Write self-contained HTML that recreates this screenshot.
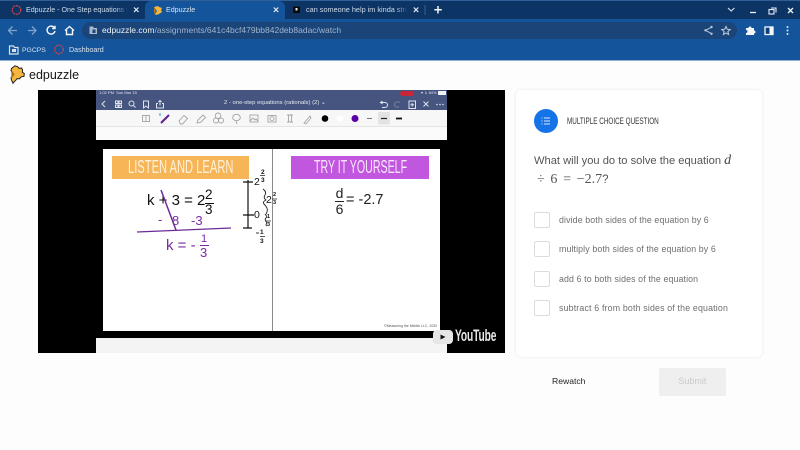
<!DOCTYPE html>
<html>
<head>
<meta charset="utf-8">
<style>
html,body{margin:0;padding:0;width:800px;height:450px;overflow:hidden;background:#fdfdfd}
body{position:relative;font-family:"Liberation Sans","DejaVu Sans",sans-serif}
.a{position:absolute;white-space:nowrap}
.b{filter:blur(.35px)}
svg{position:absolute;overflow:visible}
</style>
</head>
<body>
<!-- browser chrome -->
<div class="a" style="left:0;top:0;width:800px;height:61px;background:#14549b"></div>
<div class="a" style="left:0;top:0;width:800px;height:19px;background:#0c3566"></div>
<div class="a" style="left:0;top:0;width:800px;height:1px;background:#2f5f96"></div>
<div class="a" style="left:145px;top:1px;width:140px;height:19px;background:#14549b;border-radius:6px 6px 0 0"></div>
<div class="a" style="left:0;top:60px;width:800px;height:1px;background:#8fb0d2"></div>
<div class="a" style="left:82px;top:22px;width:655px;height:17px;border-radius:9px;background:#1b4478"></div>

<!-- tabs -->
<svg style="left:0;top:0" width="800" height="60">
 <circle cx="16.500" cy="10" r="4.300" fill="none" stroke="#c9424f" stroke-width="1.300" stroke-dasharray="2 .8"/>
 <path d="M154 7l4-1 1 1 3 1-1 2 1 2-3 2-3 1-1-1 2-3z" fill="#f4b63f"/>
 <path d="M154 7v7l2-3z" fill="#b47a1e"/>
 <rect x="293" y="6.500" width="7" height="6.500" rx="1" fill="#0a0a0a"/>
 <rect x="295.500" y="8" width="2" height="2.500" fill="#eee"/>
 <g stroke="#e8eef6" stroke-width="1.200" fill="none">
  <path d="M134 7.500l4.500 4.500M138.500 7.500l-4.500 4.500"/>
  <path d="M273.800 7.500l4.500 4.500M278.300 7.500l-4.500 4.500"/>
  <path d="M413.800 7.500l4.500 4.500M418.300 7.500l-4.500 4.500"/>
 </g>
 <path d="M425 5v10" stroke="#3a5f8c" stroke-width="1"/>
 <path d="M438 6v7.500M434.300 9.700h7.500" stroke="#f2f5f9" stroke-width="1.500"/>
 <!-- window controls -->
 <path d="M728 8l3.200 3 3.200-3" fill="none" stroke="#dce5ef" stroke-width="1.100"/>
 <path d="M750 12.500h6" stroke="#f0f4f8" stroke-width="1.300"/>
 <rect x="769" y="9.500" width="5" height="4.500" fill="none" stroke="#e8eef5" stroke-width="1.100"/>
 <path d="M771 8h5v4.500" fill="none" stroke="#e8eef5" stroke-width="1.100"/>
 <path d="M788 8l5 5M793 8l-5 5" stroke="#f0f4f8" stroke-width="1.300"/>
 <!-- nav -->
 <g fill="none" stroke-width="1.300">
  <path d="M9 30.500h8M12.500 26.500l-4 4 4 4" stroke="#7fa3c9"/>
  <path d="M28 30.500h8M32 26.500l4 4-4 4" stroke="#7fa3c9"/>
  <path d="M54.500 28a4 4 0 1 0 .5 3M55 25.800v2.800h-2.800" stroke="#f4f6f9" stroke-width="1.400"/>
  <path d="M65 30.500l4.500-4 4.500 4M66.500 30v4.500h6V30" stroke="#f4f6f9" stroke-width="1.400"/>
 </g>
 <!-- toolbar right -->
 <path d="M705.500 30.300l6-3M705.500 30.300l6 3.400" stroke="#b6c6d8" stroke-width="1" fill="none"/>
 <circle cx="705.500" cy="30.300" r="1.200" fill="#b6c6d8"/><circle cx="711.500" cy="27" r="1.200" fill="#b6c6d8"/><circle cx="711.500" cy="33.800" r="1.200" fill="#b6c6d8"/>
 <path d="M726 26.500l1.200 2.700 3 .3-2.300 2 .7 3-2.600-1.600-2.600 1.600.7-3-2.300-2 3-.3z" fill="none" stroke="#c2d0e0" stroke-width="1"/>
 <path d="M746 28h2.500a1.500 1.500 0 0 1 3 0h2.500v2.500a1.500 1.500 0 0 1 0 3V35h-8v-2a1.500 1.500 0 0 0 0-3z" fill="#f4f6f9"/>
 <rect x="765" y="27" width="8" height="7.500" fill="#0f3f78" stroke="#f4f6f9" stroke-width="1.300"/>
 <rect x="769.500" y="27" width="3.500" height="7.500" fill="#f4f6f9"/>
 <circle cx="787.500" cy="27" r="1" fill="#dfe7f0"/><circle cx="787.500" cy="30.500" r="1" fill="#dfe7f0"/><circle cx="787.500" cy="34" r="1" fill="#dfe7f0"/>
 <!-- omnibox info icon -->
 <path d="M89.500 26.500h3.500l1 1.500h3v6h-7.500z" fill="#a8bad0"/><path d="M92.500 29.500h3v3.500h-3z" fill="#1b4478"/>
 <!-- bookmarks -->
 <path d="M9.500 46h4l1 1.500h3.500V54H9.500z" fill="none" stroke="#d7e1ec" stroke-width="1.200"/>
 <rect x="12" y="49" width="4" height="3" fill="#d7e1ec"/>
 <circle cx="59" cy="49.500" r="4.300" fill="none" stroke="#c9424f" stroke-width="1.300" stroke-dasharray="2 .8"/>
</svg>

<div class="a b" style="left:26px;top:3px;width:102px;height:14px;overflow:hidden;font-size:7.100px;line-height:14px;color:#cfdae7;-webkit-mask-image:linear-gradient(90deg,#000 88%,transparent)">Edpuzzle - One Step equations w</div>
<div class="a b" style="left:166px;top:3px;font-size:7.100px;line-height:14px;color:#dce5ef">Edpuzzle</div>
<div class="a b" style="left:306px;top:3px;width:102px;height:14px;overflow:hidden;font-size:7.300px;line-height:14px;color:#cfdae7;-webkit-mask-image:linear-gradient(90deg,#000 88%,transparent)">can someone help im kinda stru</div>
<div class="a b" style="left:102px;top:23px;font-size:8.500px;line-height:15px;color:#9fb4cc"><span style="color:#eef2f7">edpuzzle.com</span>/assignments/641c4bcf479bb842deb8adac/watch</div>
<div class="a b" style="left:22px;top:43px;font-size:6.800px;line-height:15px;color:#d9e2ec">PGCPS</div>
<div class="a b" style="left:69px;top:43px;font-size:7.100px;line-height:15px;color:#d9e2ec">Dashboard</div>

<!-- edpuzzle logo -->
<svg style="left:10px;top:65px" width="16" height="19" viewBox="0 0 16 19">
 <path d="M1.500 3.500L5 .8l2.800 1L9 3.300l2.600-.3 1 2-.3 2.200 2 1.300-.3 2.800-3 .6-1.500 2-2.400-.3-1.600 2-2.500 2.600L1.500 15l-.5-2 2.800-3.500L1 5.500z" fill="#f4b63f" stroke="#222" stroke-width="1"/>
 <path d="M1.300 5.800l3 3.700-3 3.800z" fill="#a96f14"/>
</svg>
<div class="a b" style="left:29px;top:65px;font-size:12.500px;line-height:20px;color:#141414">edpuzzle</div>

<!-- video -->
<div class="a" style="left:38px;top:90px;width:467px;height:263px;background:#000"></div>
<div class="a" style="left:96px;top:90px;width:351px;height:21px;background:#45557f"></div>
<div class="a" style="left:96px;top:110px;width:351px;height:30px;background:#f7f7f7"></div>
<div class="a" style="left:96px;top:126px;width:351px;height:14px;background:#fbfbfb;border-top:1px solid #e4e4e4;box-sizing:border-box"></div>
<div class="a" style="left:96px;top:338px;width:351px;height:15px;background:#f4f4f4"></div>
<div class="a b" style="left:99px;top:89px;font-size:4px;line-height:8px;color:#dfe3ee">1:02 PM &nbsp;Sun Mar 15</div>
<div class="a" style="left:400px;top:91px;width:14px;height:5px;border-radius:3px;background:#c8273a"></div>
<div class="a b" style="left:421px;top:89px;font-size:4px;line-height:8px;color:#dfe3ee">&#9662; &#8627; 84%</div>
<div class="a" style="left:438px;top:91px;width:8px;height:4px;background:#eef0f5"></div>
<div class="a b" style="left:224px;top:99px;font-size:5.900px;line-height:9px;color:#e7eaf2">2 - one-step equations (rationals) (2) &#8964;</div>
<svg style="left:96px;top:90px" width="351" height="40">
 <g fill="none" stroke="#dfe3ee" stroke-width="1">
  <path d="M9 11l-3 3 3 3"/>
  <path d="M19.500 11h2.500v2.500h-2.500zM23 11h2.500v2.500H23zM19.500 15h2.500v2.500h-2.500zM23 15h2.500v2.500H23z"/>
  <circle cx="35.500" cy="13.500" r="2.500"/><path d="M37.500 15.500l2 2"/>
  <path d="M47.500 11h5v7l-2.500-2-2.500 2z"/>
  <path d="M62 13.500h-1.500v4.500h7v-4.500H66M64 15.500v-5M62.500 12l1.500-1.500 1.500 1.500"/>
  <path d="M285 12.500h4a2.500 2.500 0 0 1 0 5h-3M286.500 11l-2 1.500 2 1.500"/>
  <path d="M313 11h6.500v7.500H313zM316.200 13v3.500M314.500 14.700H318"/>
  <path d="M327.500 11.500l5 5M332.500 11.500l-5 5"/>
 </g>
 <path d="M304 12h-3a2.500 2.500 0 0 0 0 5h2" fill="none" stroke="#78839f"/>
 <circle cx="341" cy="14.500" r=".8" fill="#dfe3ee"/><circle cx="344" cy="14.500" r=".8" fill="#dfe3ee"/><circle cx="347" cy="14.500" r=".8" fill="#dfe3ee"/>
 <!-- toolbar -->
 <g fill="none" stroke="#a3a3a3" stroke-width=".9">
  <rect x="46.500" y="25.500" width="7" height="6"/><path d="M50 25.500v6"/>
  <path d="M83 31l5-5.500 3.500 3-5 5.500h-2z"/>
  <path d="M101 33l1-3 5-5 2.500 2.500-5 5z"/>
  <circle cx="122" cy="25.800" r="2.800"/><circle cx="120" cy="30.500" r="2.500"/><circle cx="125" cy="30.500" r="2.500"/>
  <ellipse cx="140.500" cy="27.500" rx="3.800" ry="3.200"/><path d="M140 31l1 3"/>
  <rect x="154" y="25" width="8" height="7"/><path d="M154 31l3-3 2 2 1-1 2 2"/>
  <rect x="172" y="25.500" width="8" height="6.500"/><circle cx="176" cy="28.700" r="2"/>
  <path d="M191 25h6M191 32h6M192.500 25v7M195.500 25v7"/>
  <path d="M208 33l6-7 1 2-5 6z"/>
 </g>
 <path d="M65 33l8-8" stroke="#5f1f8f" stroke-width="2"/>
 <path d="M64 23v3" stroke="#3d88c9" stroke-width="1"/>
 <circle cx="229" cy="28.500" r="3.300" fill="#000"/>
 <circle cx="244" cy="28.500" r="3.300" fill="#fff"/>
 <circle cx="259" cy="28.500" r="3.500" fill="#5b00a8"/>
 <path d="M271 28.500h5" stroke="#555" stroke-width=".8"/>
 <rect x="282" y="22" width="12" height="12.500" fill="#e3e3e3"/>
 <path d="M285 28.500h6" stroke="#222" stroke-width="1.200"/>
 <path d="M300 28.500h6" stroke="#111" stroke-width="1.800"/>
</svg>

<!-- slide -->
<div class="a" style="left:103px;top:149px;width:337px;height:182px;background:#fff"></div>
<div class="a" style="left:271.500px;top:149px;width:1px;height:182px;background:#8a8a8a"></div>
<div class="a" style="left:112px;top:156px;width:137px;height:23px;background:#f6b556"></div>
<div class="a" style="left:291px;top:156px;width:138px;height:23px;background:#c257df"></div>
<div class="a b" style="left:128px;top:156px;font-size:18px;line-height:23px;color:#fff1dc;transform:scaleX(.62);transform-origin:left">LISTEN AND LEARN</div>
<div class="a b" style="left:314px;top:156px;font-size:18px;line-height:23px;color:#f8e6fb;transform:scaleX(.59);transform-origin:left">TRY IT YOURSELF</div>

<div class="a b" style="left:147px;top:192px;font-size:15px;line-height:18px;color:#111">k + 3 = 2</div>
<div class="a b" style="left:205px;top:188px;font-size:13.500px;line-height:14px;color:#111">2</div>
<div class="a b" style="left:205px;top:203px;font-size:13.500px;line-height:14px;color:#111">3</div>
<div class="a" style="left:205px;top:202.500px;width:9px;height:1px;background:#111"></div>
<div class="a b" style="left:158px;top:212px;font-size:13px;line-height:15px;color:#7a2aa5">-</div>
<div class="a b" style="left:172px;top:213px;font-size:13px;line-height:15px;color:#7a2aa5">8</div>
<div class="a b" style="left:191px;top:213px;font-size:13px;line-height:15px;color:#7a2aa5">-3</div>
<div class="a b" style="left:166px;top:237px;font-size:15px;line-height:18px;color:#7a2aa5">k = -</div>
<div class="a b" style="left:201px;top:233px;font-size:11px;line-height:12px;color:#7a2aa5">1</div>
<div class="a b" style="left:200px;top:246px;font-size:13px;line-height:14px;color:#7a2aa5">3</div>
<div class="a" style="left:200px;top:245px;width:9px;height:1px;background:#7a2aa5"></div>
<svg style="left:100px;top:160px" width="180" height="110">
 <path d="M61 30l15 40" stroke="#6b2b97" stroke-width="1.500" fill="none"/>
 <path d="M37 72l94-4" stroke="#6b2b97" stroke-width="1.300" fill="none"/>
 <path d="M148 20v48" stroke="#111" stroke-width="1.200"/>
 <path d="M143 22h10M143 55h11M143 68h9" stroke="#111" stroke-width="1.200"/>
 <path d="M163 29q4 3 2 6t1 5q-4 2-2 4t3 4q1 3-1 6M165 54q3 3 1 4t1 5q-2 2 0 3" fill="none" stroke="#222" stroke-width=".9"/>
 <path d="M156 73h3" stroke="#222" stroke-width=".9"/>
 <path d="M160 15.500h5M172 39h5M166 61h5M160 76.500h5" stroke="#222" stroke-width=".7"/>
</svg>
<div class="a b" style="left:254px;top:177px;font-size:10.500px;line-height:10px;color:#111">2</div>
<div class="a b" style="left:261px;top:169px;font-size:6.500px;line-height:7px;color:#111;font-weight:bold">2</div>
<div class="a b" style="left:261px;top:177px;font-size:6.500px;line-height:7px;color:#111;font-weight:bold">3</div>
<div class="a b" style="left:266px;top:195px;font-size:10.500px;line-height:10px;color:#111">2</div>
<div class="a b" style="left:273px;top:192px;font-size:5.500px;line-height:6px;color:#111;font-weight:bold">2</div>
<div class="a b" style="left:273px;top:200px;font-size:5.500px;line-height:6px;color:#111;font-weight:bold">3</div>
<div class="a b" style="left:254px;top:210px;font-size:10.500px;line-height:10px;color:#111">0</div>
<div class="a b" style="left:267px;top:214px;font-size:5.500px;line-height:6px;color:#111;font-weight:bold">1</div>
<div class="a b" style="left:267px;top:222px;font-size:5.500px;line-height:6px;color:#111;font-weight:bold">3</div>
<div class="a b" style="left:260px;top:229px;font-size:6.500px;line-height:7px;color:#111;font-weight:bold">1</div>
<div class="a b" style="left:260px;top:238px;font-size:6.500px;line-height:7px;color:#111;font-weight:bold">3</div>

<div class="a b" style="left:335px;top:186px;width:9px;text-align:center;font-size:14px;line-height:14px;color:#222">d</div>
<div class="a" style="left:335px;top:201px;width:9px;height:1px;background:#222"></div>
<div class="a b" style="left:335px;top:202px;width:9px;text-align:center;font-size:14px;line-height:14px;color:#222">6</div>
<div class="a b" style="left:346px;top:192px;font-size:14.500px;line-height:17px;color:#222">= -2.7</div>
<div class="a" style="left:384px;top:324px;font-size:3.500px;line-height:5px;color:#555">&#169;Measuring the Middle LLC, 2020</div>

<!-- youtube -->
<div class="a" style="left:433px;top:330px;width:20px;height:14px;border-radius:4px;background:#e6e6e6"></div>
<svg style="left:433px;top:330px" width="20" height="14"><path d="M7.500 4.500l5 2.500-5 2.500z" fill="#111"/></svg>
<div class="a b" style="left:455px;top:326px;font-size:17px;line-height:20px;color:#e9e9e9;font-weight:bold;transform:scaleX(.6);transform-origin:left;letter-spacing:-.2px">YouTube</div>

<!-- card -->
<div class="a" style="left:516px;top:90px;width:246px;height:267px;background:#fff;border-radius:5px;box-shadow:0 0 3px rgba(0,0,0,.09)"></div>
<div class="a" style="left:534px;top:109px;width:24px;height:24px;border-radius:50%;background:#1473e6"></div>
<svg style="left:541px;top:116px" width="10" height="10"><path d="M3 2h6M3 5h6M3 8h6" stroke="#dbe9fb" stroke-width="1"/><path d="M.5 2h1M.5 5h1M.5 8h1" stroke="#dbe9fb" stroke-width="1"/></svg>
<div class="a b" style="left:567px;top:115px;font-size:8.800px;line-height:12px;color:#333;transform:scaleX(.72);transform-origin:left">MULTIPLE CHOICE QUESTION</div>
<div class="a b" style="left:534px;top:153px;font-size:11.150px;line-height:16px;color:#555">What will you do to solve the equation <span style="font:italic 14px 'Liberation Serif',serif;color:#444">d</span></div>
<div class="a b" style="left:537px;top:171px;font:14px/17px 'Liberation Serif',serif;color:#555;word-spacing:2.200px">&#247; 6 = &#8722;2.7<span style="font:11.500px 'Liberation Sans',sans-serif">?</span></div>

<div class="a" style="left:534px;top:212px;width:16px;height:16px;box-sizing:border-box;border:1px solid #dcdcdc;border-radius:2px"></div>
<div class="a" style="left:534px;top:241px;width:16px;height:16px;box-sizing:border-box;border:1px solid #dcdcdc;border-radius:2px"></div>
<div class="a" style="left:534px;top:271px;width:16px;height:16px;box-sizing:border-box;border:1px solid #dcdcdc;border-radius:2px"></div>
<div class="a" style="left:534px;top:300px;width:16px;height:16px;box-sizing:border-box;border:1px solid #dcdcdc;border-radius:2px"></div>
<div class="a b" style="left:559px;top:213px;font-size:8.800px;line-height:14px;color:#6e6e6e;letter-spacing:.12px">divide both sides of the equation by 6</div>
<div class="a b" style="left:559px;top:242px;font-size:8.800px;line-height:14px;color:#6e6e6e;letter-spacing:.12px">multiply both sides of the equation by 6</div>
<div class="a b" style="left:559px;top:272px;font-size:8.800px;line-height:14px;color:#6e6e6e;letter-spacing:.12px">add 6 to both sides of the equation</div>
<div class="a b" style="left:559px;top:301px;font-size:8.800px;line-height:14px;color:#6e6e6e;letter-spacing:.17px">subtract 6 from both sides of the equation</div>

<div class="a b" style="left:552px;top:375px;font-size:8.600px;line-height:13px;color:#222">Rewatch</div>
<div class="a" style="left:659px;top:368px;width:67px;height:28px;border-radius:2px;background:#efefef"></div>
<div class="a b" style="left:659px;top:375px;width:67px;text-align:center;font-size:8.800px;line-height:13px;color:#c9c9c9;letter-spacing:.1px">Submit</div>
</body>
</html>
